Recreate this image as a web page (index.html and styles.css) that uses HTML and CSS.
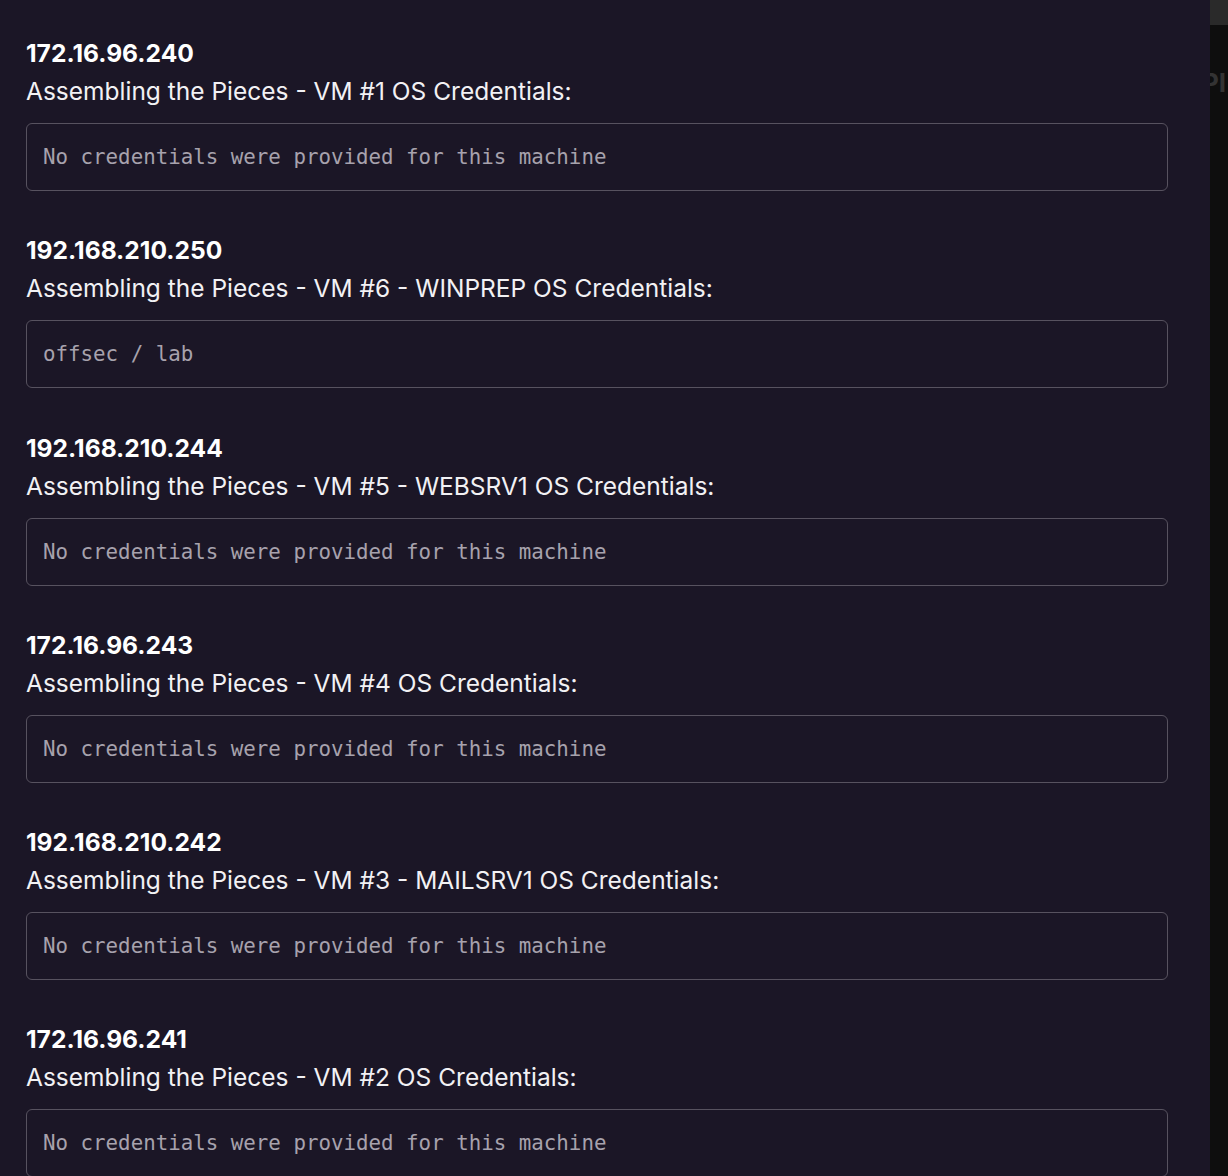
FILE: index.html
```html
<!DOCTYPE html>
<html>
<head>
<meta charset="utf-8">
<link rel="stylesheet" href="styles.css">
</head>
<body>
<div class="page">
  <div class="dialog">
    <section class="machine">
      <h2 class="ip">172.16.96.240</h2>
      <div class="title">Assembling the Pieces - VM #1 OS Credentials:</div>
      <pre class="creds">No credentials were provided for this machine</pre>
    </section>
    <section class="machine">
      <h2 class="ip">192.168.210.250</h2>
      <div class="title">Assembling the Pieces - VM #6 - WINPREP OS Credentials:</div>
      <pre class="creds">offsec / lab</pre>
    </section>
    <section class="machine">
      <h2 class="ip">192.168.210.244</h2>
      <div class="title">Assembling the Pieces - VM #5 - WEBSRV1 OS Credentials:</div>
      <pre class="creds">No credentials were provided for this machine</pre>
    </section>
    <section class="machine">
      <h2 class="ip">172.16.96.243</h2>
      <div class="title">Assembling the Pieces - VM #4 OS Credentials:</div>
      <pre class="creds">No credentials were provided for this machine</pre>
    </section>
    <section class="machine">
      <h2 class="ip">192.168.210.242</h2>
      <div class="title">Assembling the Pieces - VM #3 - MAILSRV1 OS Credentials:</div>
      <pre class="creds">No credentials were provided for this machine</pre>
    </section>
    <section class="machine">
      <h2 class="ip">172.16.96.241</h2>
      <div class="title">Assembling the Pieces - VM #2 OS Credentials:</div>
      <pre class="creds">No credentials were provided for this machine</pre>
    </section>
  </div>
  <div class="backdrop">
    <div class="backdrop-bar"></div>
    <div class="backdrop-text">PI</div>
  </div>
</div>
</body>
</html>
```

FILE: styles.css
```css
html, body {
  margin: 0;
  padding: 0;
  height: 1176px;
  overflow: hidden;
  background: #0d0d0d;
}

.page {
  display: flex;
  height: 1176px;
}

.dialog {
  width: 1210px;
  flex: none;
  box-sizing: border-box;
  background: #1b1626;
  padding: 34px 42px 0 26px;
  overflow: hidden;
  font-family: Inter, "Noto Sans", sans-serif;
}

.machine {
  margin-bottom: 40.3px;
}

.ip {
  margin: 0;
  font-size: 24.6px;
  line-height: 38px;
  font-weight: 700;
  color: #ffffff;
  letter-spacing: 0;
}

.title {
  font-size: 24.5px;
  line-height: 38px;
  font-weight: 400;
  color: #f2f1f4;
  letter-spacing: 0;
}

.creds {
  margin: 13px 0 0 0;
  padding: 20px 16px;
  border: 1px solid #57525f;
  border-radius: 6px;
  font-family: "DejaVu Sans Mono", "Liberation Mono", monospace;
  font-size: 20.8px;
  line-height: 26px;
  color: #a7a2ad;
  white-space: pre;
}

.backdrop {
  flex: 1;
  position: relative;
  overflow: hidden;
  background: #0e0e0e;
}

.backdrop-bar {
  height: 25px;
  background: #2a2a2a;
}

.backdrop-text {
  margin: 43px 0 0 -8px;
  font-family: Inter, sans-serif;
  font-weight: 700;
  font-size: 26px;
  line-height: 30px;
  color: #333333;
  white-space: nowrap;
}
```
